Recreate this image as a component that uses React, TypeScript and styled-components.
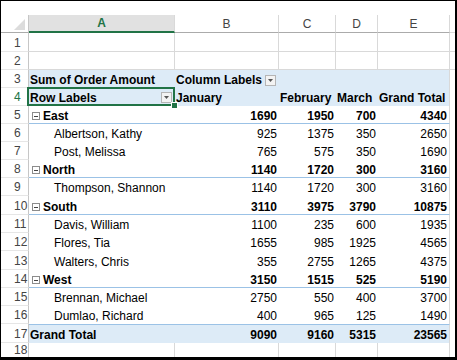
import React from "react";
import styled, { createGlobalStyle, css } from "styled-components";

const GlobalStyle = createGlobalStyle`
  html, body {
    margin: 0;
    padding: 0;
    background: #fff;
  }
`;

type Member = { name: string; values: number[] };
type Region = { name: string; values: number[]; members: Member[] };

const regions: Region[] = [
  {
    name: "East",
    values: [1690, 1950, 700, 4340],
    members: [
      { name: "Albertson, Kathy", values: [925, 1375, 350, 2650] },
      { name: "Post, Melissa", values: [765, 575, 350, 1690] },
    ],
  },
  {
    name: "North",
    values: [1140, 1720, 300, 3160],
    members: [{ name: "Thompson, Shannon", values: [1140, 1720, 300, 3160] }],
  },
  {
    name: "South",
    values: [3110, 3975, 3790, 10875],
    members: [
      { name: "Davis, William", values: [1100, 235, 600, 1935] },
      { name: "Flores, Tia", values: [1655, 985, 1925, 4565] },
      { name: "Walters, Chris", values: [355, 2755, 1265, 4375] },
    ],
  },
  {
    name: "West",
    values: [3150, 1515, 525, 5190],
    members: [
      { name: "Brennan, Michael", values: [2750, 550, 400, 3700] },
      { name: "Dumlao, Richard", values: [400, 965, 125, 1490] },
    ],
  },
];

const grandTotal = [9090, 9160, 5315, 23565];

// row heights in px, rows 5..17 (the screenshot is slightly scaled)
const bodyHeights = [18, 18, 18, 18, 18, 19, 18, 18, 19, 18, 18, 18, 19];

const GREEN = "#217346";
const GRID = "#d9d9d9";
const BAND = "#ddebf7";
const RULE = "#9bc2e6";

const Frame = styled.div`
  width: 457px;
  height: 360px;
  box-sizing: border-box;
  border-style: solid;
  border-color: #000;
  border-width: 1px 2px 3px 1px;
  background: #fff;
  display: flex;
  flex-direction: column;
  overflow: hidden;
  font-family: "Liberation Sans", Arial, sans-serif;
  font-size: 12px;
  color: #000;
`;

const TopGap = styled.div`
  height: 14px;
  flex: none;
`;

const Row = styled.div<{ $h?: number }>`
  display: grid;
  grid-template-columns: 28px 146px 104px 57px 42px 72px 1fr;
  height: ${(p) => (p.$h ? `${p.$h}px` : "auto")};
  flex: ${(p) => (p.$h ? "none" : "1")};
  & > * {
    box-sizing: border-box;
    min-width: 0;
  }
`;

const Corner = styled.div`
  border-right: 1px solid #c6c6c6;
  border-bottom: 1px solid #ababab;
  display: flex;
  align-items: flex-end;
  justify-content: flex-end;
  padding: 0 3px 2px 0;
`;

const ColHead = styled.div<{ $active?: boolean }>`
  display: flex;
  align-items: center;
  justify-content: center;
  border-right: 1px solid ${GRID};
  ${(p) =>
    p.$active
      ? css`
          background: #e1e1e1;
          color: ${GREEN};
          font-weight: bold;
          border-bottom: 2px solid ${GREEN};
        `
      : css`
          background: #fff;
          color: #444;
          border-bottom: 1px solid #ababab;
        `}
`;

const RowNum = styled.div<{ $active?: boolean }>`
  display: flex;
  align-items: flex-end;
  padding: 0 0 1px 13px;
  line-height: 14px;
  color: ${(p) => (p.$active ? GREEN : "#444")};
  border-right: 1px solid #c6c6c6;
  border-bottom: 1px solid #e6e6e6;
`;

const GridCell = styled.div<{ $tail?: boolean }>`
  border-bottom: 1px solid ${GRID};
  border-right: ${(p) => (p.$tail ? "none" : `1px solid ${GRID}`)};
`;

const Tail = styled.div`
  background: #fff;
`;

const Cell = styled.div<{
  $band?: boolean;
  $rule?: "top" | "bottom";
  $num?: boolean;
  $bold?: boolean;
  $indent?: number;
  $edge?: boolean;
}>`
  display: flex;
  align-items: flex-end;
  justify-content: ${(p) => (p.$num ? "flex-end" : "flex-start")};
  white-space: nowrap;
  line-height: 14px;
  padding: 0 2px ${(p) => (p.$rule === "bottom" ? 0 : 1)}px
    ${(p) => (p.$indent ?? 1)}px;
  font-weight: ${(p) => (p.$bold ? "bold" : "normal")};
  background: ${(p) => (p.$band ? BAND : "#fff")};
  border-bottom: ${(p) => (p.$rule === "bottom" ? `1px solid ${RULE}` : "none")};
  border-top: ${(p) => (p.$rule === "top" ? `1px solid ${RULE}` : "none")};
  border-right: ${(p) => (p.$edge ? `1px solid ${GRID}` : "none")};
`;

const SelectedCell = styled(Cell)`
  position: relative;
  justify-content: space-between;
  padding-right: 3px;

  &::after {
    content: "";
    position: absolute;
    top: -1px;
    left: -2px;
    right: 0;
    bottom: 0;
    border: 2px solid ${GREEN};
    pointer-events: none;
  }
`;

const FillHandle = styled.span`
  position: absolute;
  right: -3px;
  bottom: -3px;
  width: 5px;
  height: 5px;
  background: ${GREEN};
  border: 1px solid #fff;
  z-index: 2;
`;

const LabelWithButton = styled.span`
  display: inline-flex;
  align-items: center;
  gap: 3px;
`;

const DropButton = styled.span`
  width: 11px;
  height: 11px;
  box-sizing: border-box;
  border: 1px solid #b5b5b5;
  background: #f3f3f3;
  display: inline-flex;
  align-items: center;
  justify-content: center;
  align-self: center;
  margin-bottom: -1px;
`;

const RegionLabel = styled.span`
  display: inline-flex;
  align-items: center;
  gap: 3px;
`;

const Toggle = styled.span`
  width: 8px;
  height: 8px;
  box-sizing: border-box;
  border: 1px solid #8c8c8c;
  background: #fff;
  display: inline-flex;
  align-items: center;
  justify-content: center;
  &::before {
    content: "";
    width: 4px;
    height: 1px;
    background: #444;
  }
`;

function Arrow() {
  return (
    <svg width="5" height="3" viewBox="0 0 5 3">
      <polygon points="0,0 5,0 2.5,3" fill="#555" />
    </svg>
  );
}

function CornerMark() {
  return (
    <svg width="11" height="11" viewBox="0 0 11 11">
      <polygon points="11,0 11,11 0,11" fill="#dcdcdc" />
    </svg>
  );
}

function EmptyRow({ n, h }: { n: number; h?: number }) {
  return (
    <Row $h={h}>
      <RowNum>{n}</RowNum>
      <GridCell />
      <GridCell />
      <GridCell />
      <GridCell />
      <GridCell />
      <GridCell $tail />
    </Row>
  );
}

function ValueCells({
  values,
  bold,
  band,
  rule,
}: {
  values: number[];
  bold?: boolean;
  band?: boolean;
  rule?: "top" | "bottom";
}) {
  return (
    <>
      {values.map((v, i) => (
        <Cell
          key={i}
          $num
          $bold={bold}
          $band={band}
          $rule={rule}
          $edge={i === values.length - 1}
        >
          {v}
        </Cell>
      ))}
    </>
  );
}

export default function App() {
  let rowNo = 5;
  let hIdx = 0;
  const bodyRows: React.ReactNode[] = [];

  regions.forEach((r) => {
    const n = rowNo++;
    bodyRows.push(
      <Row key={`r${n}`} $h={bodyHeights[hIdx++]}>
        <RowNum>{n}</RowNum>
        <Cell $bold $rule="bottom" $indent={3}>
          <RegionLabel>
            <Toggle />
            {r.name}
          </RegionLabel>
        </Cell>
        <ValueCells values={r.values} bold rule="bottom" />
        <Tail />
      </Row>
    );
    r.members.forEach((m) => {
      const k = rowNo++;
      bodyRows.push(
        <Row key={`r${k}`} $h={bodyHeights[hIdx++]}>
          <RowNum>{k}</RowNum>
          <Cell $indent={25}>{m.name}</Cell>
          <ValueCells values={m.values} />
          <Tail />
        </Row>
      );
    });
  });

  return (
    <>
      <GlobalStyle />
      <Frame>
        <TopGap />
        <Row $h={18}>
          <Corner>
            <CornerMark />
          </Corner>
          <ColHead $active>A</ColHead>
          <ColHead>B</ColHead>
          <ColHead>C</ColHead>
          <ColHead>D</ColHead>
          <ColHead>E</ColHead>
          <GridCell $tail />
        </Row>

        <EmptyRow n={1} h={19} />
        <EmptyRow n={2} h={18} />

        <Row $h={18}>
          <RowNum>3</RowNum>
          <Cell $band $bold>
            Sum of Order Amount
          </Cell>
          <Cell $band $bold>
            <LabelWithButton>
              Column Labels
              <DropButton>
                <Arrow />
              </DropButton>
            </LabelWithButton>
          </Cell>
          <Cell $band />
          <Cell $band />
          <Cell $band $edge />
          <Tail />
        </Row>

        <Row $h={18}>
          <RowNum $active>4</RowNum>
          <SelectedCell $band $bold>
            Row Labels
            <DropButton>
              <Arrow />
            </DropButton>
            <FillHandle />
          </SelectedCell>
          <Cell $band $bold>
            January
          </Cell>
          <Cell $band $bold>
            February
          </Cell>
          <Cell $band $bold>
            March
          </Cell>
          <Cell $band $bold $edge>
            Grand Total
          </Cell>
          <Tail />
        </Row>

        {bodyRows}

        <Row $h={bodyHeights[hIdx]}>
          <RowNum>17</RowNum>
          <Cell $band $bold $rule="top">
            Grand Total
          </Cell>
          <ValueCells values={grandTotal} bold band rule="top" />
          <Tail />
        </Row>

        <EmptyRow n={18} />
      </Frame>
    </>
  );
}
